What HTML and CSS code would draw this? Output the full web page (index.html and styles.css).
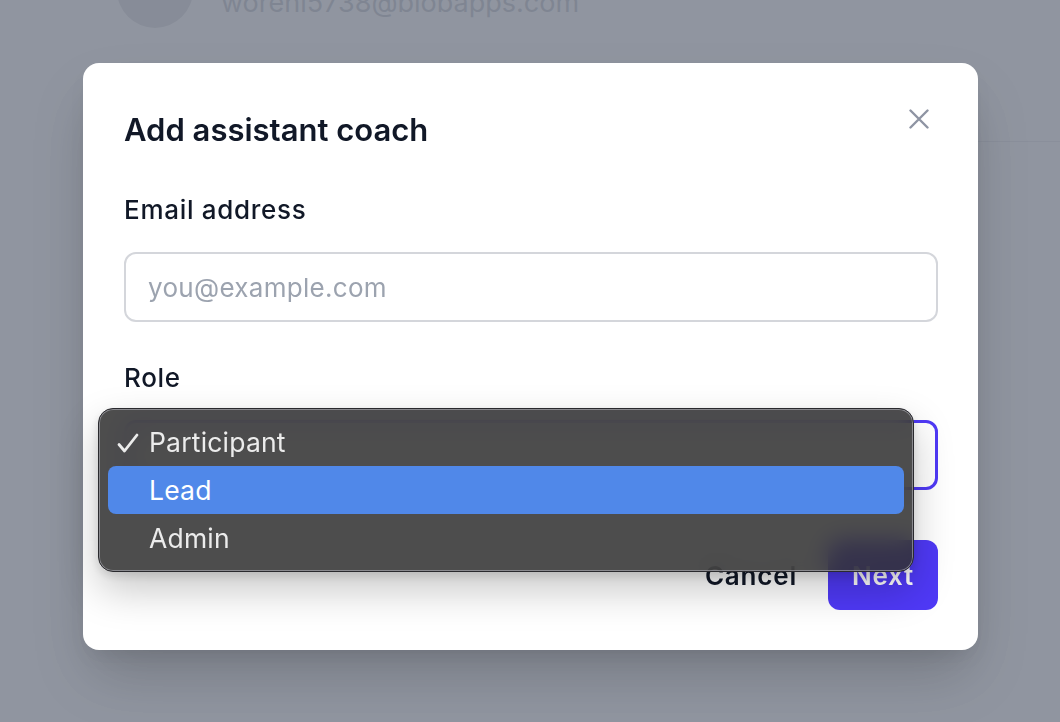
FILE: index.html
```html
<!DOCTYPE html>
<html lang="en">
<head>
<meta charset="utf-8">
<title>Add assistant coach</title>
<link rel="stylesheet" href="styles.css">
</head>
<body>
<div class="page">
  <div class="member">
    <div class="avatar"></div>
    <div class="member-email">worehi5738@blobapps.com</div>
  </div>
  <div class="divider"></div>
</div>

<div class="overlay">
  <div class="modal">
    <div class="modal-header">
      <h2 class="modal-title">Add assistant coach</h2>
      <button class="close-btn" aria-label="Close">
        <svg width="20" height="20" viewBox="0 0 20 20" fill="none" stroke="currentColor" stroke-width="2.4" stroke-linecap="round"><path d="M1.5 1.5 L18.5 18.5 M18.5 1.5 L1.5 18.5"/></svg>
      </button>
    </div>

    <label class="field-label label-email">Email address</label>
    <div class="input">you@example.com</div>

    <label class="field-label label-role">Role</label>
    <div class="select"></div>

    <div class="actions">
      <button class="btn-cancel">Cancel</button>
      <button class="btn-next">Next</button>
    </div>

    <div class="menu">
      <div class="menu-item">
        <svg class="check" width="22" height="20" viewBox="0 0 22 20" fill="none" stroke="currentColor" stroke-width="2.8" stroke-linecap="round" stroke-linejoin="round"><path d="M2 11.5 L7.5 18 L20 2"/></svg>Participant
      </div>
      <div class="menu-item active">Lead</div>
      <div class="menu-item">Admin</div>
    </div>
  </div>
</div>
</body>
</html>
```

FILE: styles.css
```css
* { box-sizing: border-box; }

html, body {
  margin: 0;
  padding: 0;
  width: 1060px;
  height: 722px;
  overflow: hidden;
  background: #ffffff;
  font-family: "Inter", "Noto Sans", sans-serif;
}

.page {
  position: relative;
  height: 722px;
}

.member {
  display: flex;
  align-items: flex-end;
  gap: 28px;
  padding-left: 117px;
  margin-top: -48px;
}

.avatar {
  width: 76px;
  height: 76px;
  border-radius: 50%;
  background: #dadbdd;
  flex: none;
}

.member-email {
  font-size: 27px;
  line-height: 34px;
  color: #bcc0c7;
  margin-bottom: 8px;
}

.divider {
  margin-top: 113px;
  border-top: 1px solid #e5e7eb;
  margin-left: 600px;
}

.overlay {
  position: fixed;
  inset: 0;
  background: rgba(107, 114, 128, 0.75);
  display: flex;
  align-items: flex-start;
  padding: 63px 0 0 83px;
}

.modal {
  position: relative;
  width: 895px;
  background: #ffffff;
  border-radius: 16px;
  padding: 47px 40px 40px 41px;
  box-shadow: 0 30px 60px -8px rgba(0, 0, 0, 0.2), 0 10px 20px -5px rgba(0, 0, 0, 0.08);
  display: flex;
  flex-direction: column;
}

.modal-header {
  display: flex;
  justify-content: space-between;
  align-items: flex-start;
}

.modal-title {
  margin: 0;
  font-size: 31px;
  line-height: 40px;
  font-weight: 600;
  color: #111827;
  letter-spacing: 0;
}

.close-btn {
  border: 0;
  background: none;
  padding: 0;
  margin: -1px 9px 0 0;
  width: 20px;
  height: 20px;
  color: #8e94a3;
  display: flex;
}

.field-label {
  font-size: 26px;
  line-height: 32px;
  font-weight: 500;
  letter-spacing: 0.7px;
  color: #111827;
}

.label-email { margin-top: 44px; }
.label-role { margin-top: 40px; }

.input, .select {
  margin-top: 26px;
  height: 70px;
  border-radius: 12px;
  display: flex;
  align-items: center;
  padding-left: 22px;
}

.input {
  border: 2px solid #d4d6db;
  color: #9ca3af;
  font-size: 26px;
  letter-spacing: 0.3px;
}

.select {
  border: 3px solid #4f39f6;
}

.actions {
  margin-top: 50px;
  display: flex;
  justify-content: flex-end;
  align-items: center;
  gap: 31px;
}

.btn-cancel, .btn-next {
  font-family: inherit;
  font-size: 26px;
  font-weight: 600;
  letter-spacing: 0.8px;
  border: 0;
  cursor: pointer;
}

.btn-cancel {
  background: none;
  color: #111827;
  padding: 0;
}

.btn-next {
  background: #4f39f6;
  color: #ffffff;
  height: 70px;
  width: 110px;
  border-radius: 12px;
  padding: 0;
}

.menu {
  position: absolute;
  left: 15px;
  top: 345px;
  width: 816px;
  height: 164px;
  padding: 9px 9px;
  border-radius: 15px;
  background: rgba(48, 48, 48, 0.86);
  backdrop-filter: blur(12px);
  border: 1px solid #2a2a2e;
  box-shadow: inset 0 0 0 1px rgba(200, 200, 210, 0.5), 0 18px 40px rgba(0, 0, 0, 0.22), 0 4px 10px rgba(0, 0, 0, 0.12);
  display: flex;
  flex-direction: column;
}

.menu-item {
  position: relative;
  height: 48px;
  border-radius: 8px;
  display: flex;
  align-items: center;
  padding-left: 41px;
  font-size: 26.5px;
  letter-spacing: 0.2px;
  color: #ececec;
}

.menu-item.active {
  background: #5088e9;
  color: #ffffff;
}

.check {
  position: absolute;
  left: 9px;
  top: 15px;
}
```
